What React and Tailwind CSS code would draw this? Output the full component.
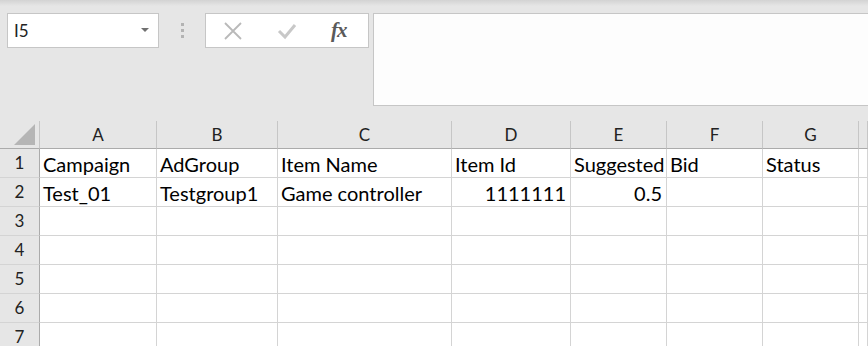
import React from 'react';

const cols = ['A', 'B', 'C', 'D', 'E', 'F', 'G', ''];

const rows = [
  [
    { v: 'Campaign' },
    { v: 'AdGroup' },
    { v: 'Item Name' },
    { v: 'Item Id' },
    { v: 'Suggested', overflow: true },
    { v: 'Bid' },
    { v: 'Status' },
    { v: '' },
  ],
  [
    { v: 'Test_01' },
    { v: 'Testgroup1' },
    { v: 'Game controller' },
    { v: '1111111', num: true },
    { v: '0.5', num: true },
    { v: '' },
    { v: '' },
    { v: '' },
  ],
];

const empty = Array.from({ length: 8 }, () => ({ v: '' }));

function App() {
  const allRows = [...rows, empty, empty, empty, empty, empty];

  return (
    <div className="w-[868px] h-[346px] overflow-hidden bg-white font-['Lato',sans-serif] text-black">
      {/* formula bar area */}
      <div className="h-[121px] bg-[linear-gradient(#d3d3d3,#e6e6e6_6px)] flex items-start pt-[13px] pl-[7px]">
        <div className="w-[152px] h-[35px] bg-white border border-[#c6c6c6] flex items-center justify-between pl-[6px] pr-[9px]">
          <span className="text-[17px] text-[#222] leading-none">I5</span>
          <svg width="8" height="5" viewBox="0 0 8 5">
            <polygon points="0,0 8,0 4,4" fill="#707070" />
          </svg>
        </div>
        <div className="w-[46px] h-[35px] flex flex-col items-center justify-center gap-[3px]">
          <span className="w-[3px] h-[3px] bg-[#b3b3b3]" />
          <span className="w-[3px] h-[3px] bg-[#b3b3b3]" />
          <span className="w-[3px] h-[3px] bg-[#b3b3b3]" />
        </div>
        <div className="w-[164px] h-[35px] bg-white border border-[#c6c6c6] flex items-center pl-[17px] gap-[34px]">
          <svg width="20" height="18" viewBox="0 0 20 18">
            <path d="M2 1 L18 17 M18 1 L2 17" stroke="#b9b9b9" strokeWidth="1.8" fill="none" />
          </svg>
          <svg width="20" height="18" viewBox="0 0 20 18">
            <path d="M2 9 L8 15 L18 3" stroke="#c8c8c8" strokeWidth="3" fill="none" />
          </svg>
          <span className="font-['Liberation_Serif',serif] italic font-bold text-[21px] text-[#5a5a5a] leading-none tracking-[-1px]">fx</span>
        </div>
        <div className="ml-[4px] flex-1 h-[93px] bg-[#fdfdfd] border border-[#c6c6c6] border-r-0" />
      </div>

      {/* sheet */}
      <div className="grid grid-cols-[40px_117px_121px_174px_119px_96px_96px_96px_1fr]">
        <div className="h-[28px] bg-[#e6e6e6] border-r border-r-[#c6c6c6] border-b border-b-[#ababab] flex items-end justify-end pr-[3px] pb-[2px]">
          <svg width="22" height="22" viewBox="0 0 22 22">
            <polygon points="21,0 21,21 0,21" fill="#b5b5b5" />
          </svg>
        </div>
        {cols.map((c, i) => (
          <div
            key={i}
            className="h-[28px] bg-[#e6e6e6] border-r border-r-[#c6c6c6] border-b border-b-[#ababab] flex items-center justify-center text-[17px] text-[#222]"
          >
            {c}
          </div>
        ))}

        {allRows.map((r, ri) => (
          <React.Fragment key={ri}>
            <div className="h-[29px] bg-[#e6e6e6] border-r border-r-[#ababab] border-b border-b-[#d4d4d4] flex items-center justify-center text-[17px] text-[#222]">
              {ri + 1}
            </div>
            {r.map((cell, ci) => (
              <div
                key={ci}
                className={`h-[29px] border-r border-r-[#d4d4d4] border-b border-b-[#d4d4d4] flex items-end pb-[3px] text-[20px] leading-none whitespace-nowrap ${
                  cell.num ? 'justify-end pr-[4px]' : 'pl-[3px]'
                } ${cell.overflow ? 'overflow-visible relative z-10' : 'overflow-hidden'}`}
              >
                {cell.v}
              </div>
            ))}
          </React.Fragment>
        ))}
      </div>
    </div>
  );
}

export default App;
